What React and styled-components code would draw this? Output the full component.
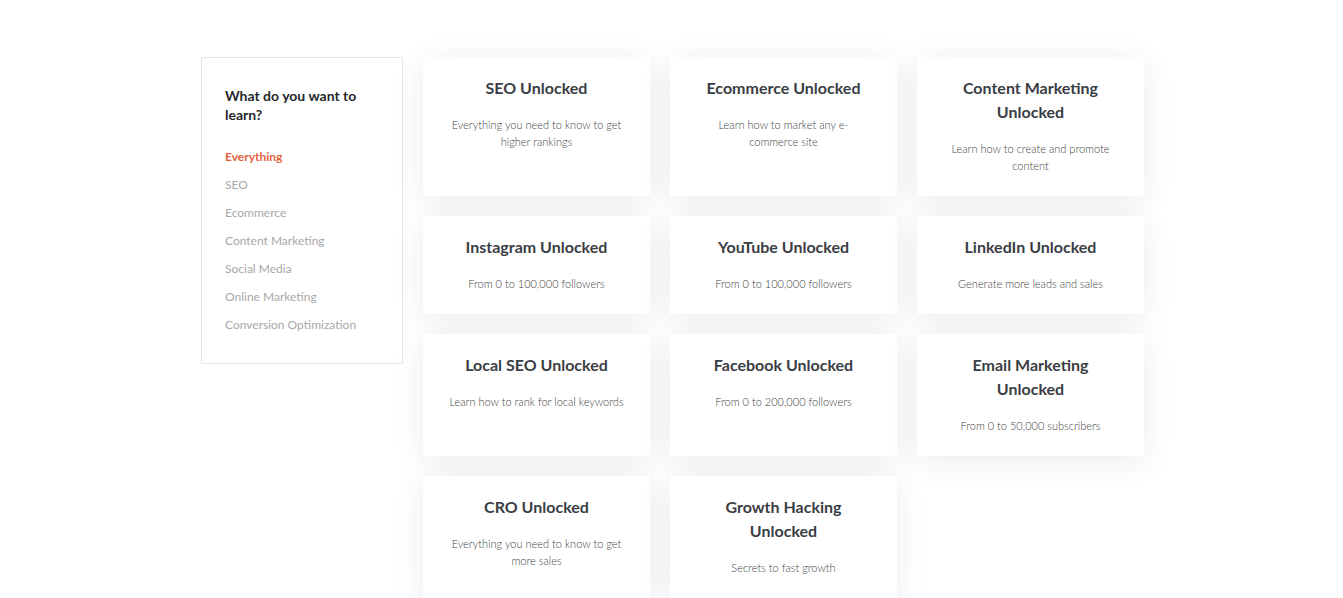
import React, { useState } from "react";
import styled, { createGlobalStyle } from "styled-components";

const GlobalStyle = createGlobalStyle`
  * { box-sizing: border-box; }
  body {
    margin: 0;
    background: #fff;
    font-family: Lato, "Open Sans", sans-serif;
  }
`;

const Page = styled.div`
  width: 945px;
  margin: 57px auto 0;
  padding-left: 2px;
  display: flex;
  align-items: flex-start;
  gap: 20px;
`;

const Sidebar = styled.aside`
  width: 202px;
  flex-shrink: 0;
  border: 1px solid #e6e6e6;
  padding: 28px 23px 24px;
`;

const SideTitle = styled.h3`
  margin: 0 0 19px;
  font-size: 14px;
  line-height: 19px;
  font-weight: 700;
  color: #25282c;
`;

const FilterList = styled.ul`
  list-style: none;
  margin: 0;
  padding: 0;
`;

const FilterItem = styled.li`
  font-size: 12px;
  line-height: 28px;
  cursor: pointer;
  color: ${(p) => (p.$active ? "#e1643c" : "#a8a8a8")};
  font-weight: ${(p) => (p.$active ? 700 : 400)};
`;

const Grid = styled.div`
  display: grid;
  grid-template-columns: repeat(3, 227px);
  gap: 20px;
`;

const Card = styled.div`
  background: #fff;
  padding: 19px 25px 22px;
  text-align: center;
  box-shadow: 0 5px 30px rgba(20, 30, 50, 0.085);
`;

const CardTitle = styled.h4`
  margin: 0 0 16px;
  font-size: 16px;
  line-height: 24px;
  font-weight: 700;
  color: #3a3e44;
`;

const CardText = styled.p`
  margin: 0;
  font-size: 11px;
  line-height: 17px;
  font-weight: 300;
  color: #444;
`;

const filters = [
  "Everything",
  "SEO",
  "Ecommerce",
  "Content Marketing",
  "Social Media",
  "Online Marketing",
  "Conversion Optimization",
];

const courses = [
  { title: "SEO Unlocked", text: "Everything you need to know to get higher rankings" },
  { title: "Ecommerce Unlocked", text: "Learn how to market any e-commerce site" },
  { title: "Content Marketing Unlocked", text: "Learn how to create and promote content" },
  { title: "Instagram Unlocked", text: "From 0 to 100,000 followers" },
  { title: "YouTube Unlocked", text: "From 0 to 100,000 followers" },
  { title: "LinkedIn Unlocked", text: "Generate more leads and sales" },
  { title: "Local SEO Unlocked", text: "Learn how to rank for local keywords" },
  { title: "Facebook Unlocked", text: "From 0 to 200,000 followers" },
  { title: "Email Marketing Unlocked", text: "From 0 to 50,000 subscribers" },
  { title: "CRO Unlocked", text: "Everything you need to know to get more sales" },
  { title: "Growth Hacking Unlocked", text: "Secrets to fast growth" },
];

const App = () => {
  const [active, setActive] = useState("Everything");

  return (
    <>
      <GlobalStyle />
      <Page>
        <Sidebar>
          <SideTitle>What do you want to learn?</SideTitle>
          <FilterList>
            {filters.map((f) => (
              <FilterItem key={f} $active={f === active} onClick={() => setActive(f)}>
                {f}
              </FilterItem>
            ))}
          </FilterList>
        </Sidebar>
        <Grid>
          {courses.map((c) => (
            <Card key={c.title}>
              <CardTitle>{c.title}</CardTitle>
              <CardText>{c.text}</CardText>
            </Card>
          ))}
        </Grid>
      </Page>
    </>
  );
};

export default App;
